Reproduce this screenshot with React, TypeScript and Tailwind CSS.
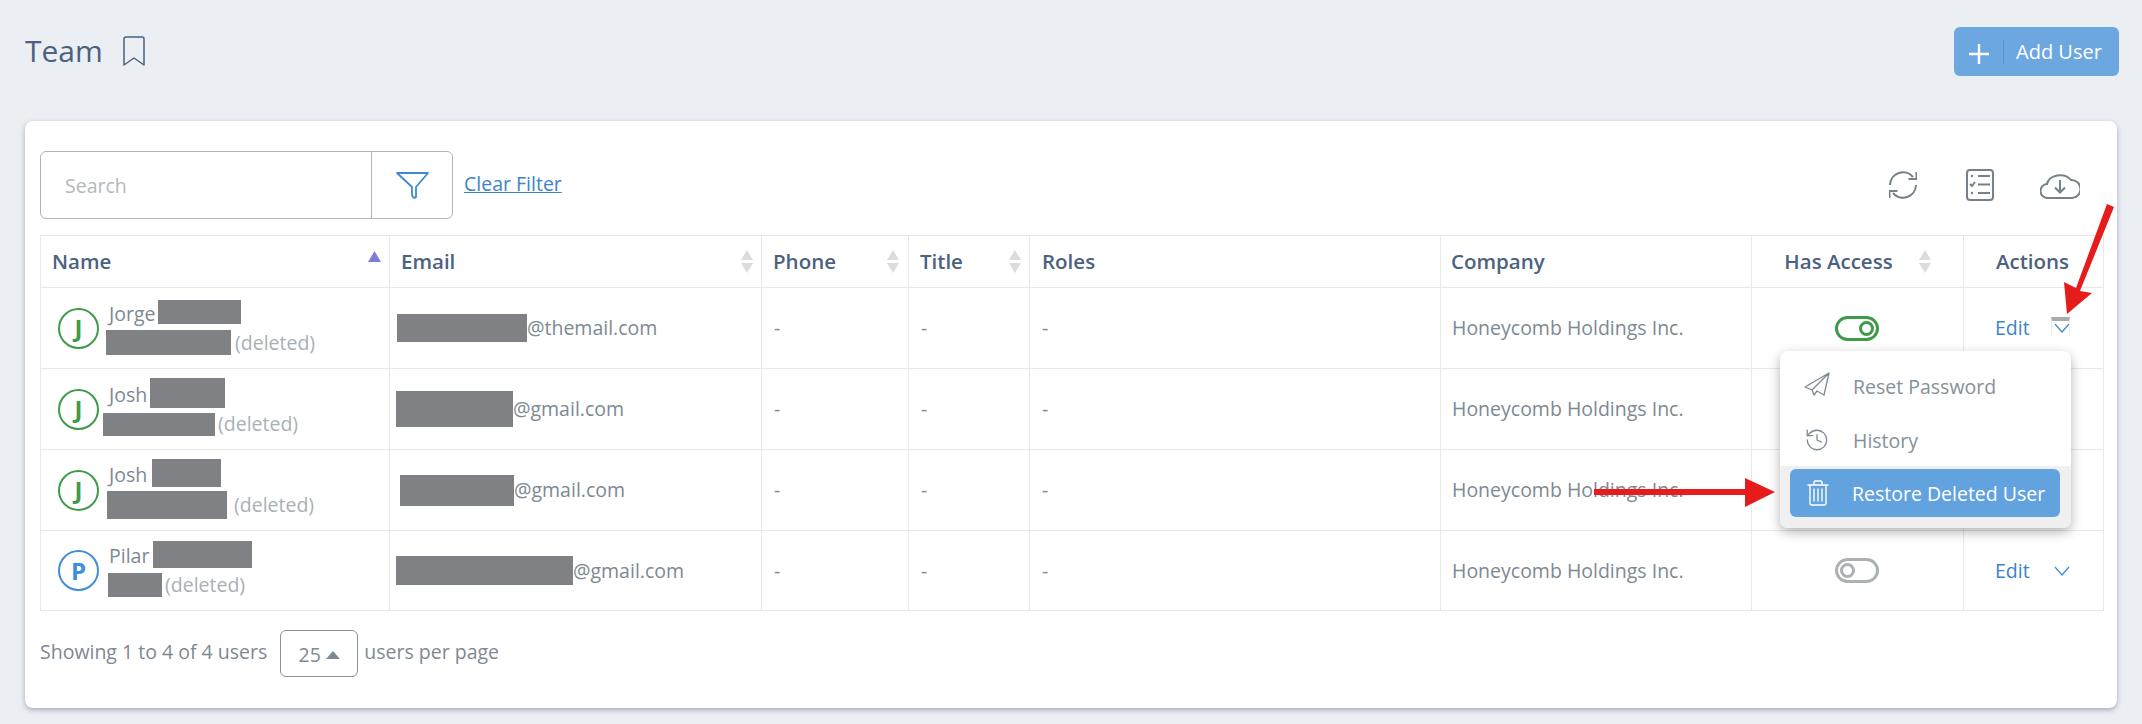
import { History } from 'lucide-react'

const users = [
  {
    first: 'Jorge',
    letter: 'J',
    ring: 'border-[#3f9a49] text-[#3f9a49]',
    rowH: 'h-[81px]',
    nameBox: 'w-[83px] h-[24px] ml-[3px] mt-[-3px]',
    lastBox: 'w-[125px] h-[25px] ml-[-3px]',
    delGap: 'ml-[4px]',
    nameLeft: 'ml-[10px]',
    mailBox: 'w-[130px] h-[28px] ml-[-1px]',
    domain: '@themail.com',
    access: true,
  },
  {
    first: 'Josh',
    letter: 'J',
    ring: 'border-[#3f9a49] text-[#3f9a49]',
    rowH: 'h-[81px]',
    nameBox: 'w-[75px] h-[30px] ml-[3px] mt-[-3px]',
    lastBox: 'w-[112px] h-[23px] ml-[-6px]',
    delGap: 'ml-[3px]',
    nameLeft: 'ml-[10px]',
    mailBox: 'w-[117px] h-[36px] ml-[-2px]',
    domain: '@gmail.com',
    access: true,
  },
  {
    first: 'Josh',
    letter: 'J',
    ring: 'border-[#3f9a49] text-[#3f9a49]',
    rowH: 'h-[81px]',
    nameBox: 'w-[69px] h-[28px] ml-[5px] mt-[-3px]',
    lastBox: 'w-[120px] h-[28px] ml-[-2px]',
    delGap: 'ml-[7px]',
    nameLeft: 'ml-[10px]',
    mailBox: 'w-[114px] h-[31px] ml-[2px]',
    domain: '@gmail.com',
    access: true,
  },
  {
    first: 'Pilar',
    letter: 'P',
    ring: 'border-[#3e8edc] text-[#3e8edc]',
    rowH: 'h-[80px]',
    nameBox: 'w-[99px] h-[27px] ml-[4px] mt-[-3px]',
    lastBox: 'w-[54px] h-[24px] ml-[-1px]',
    delGap: 'ml-[3px]',
    nameLeft: 'ml-[10px]',
    mailBox: 'w-[177px] h-[29px] ml-[-2px]',
    domain: '@gmail.com',
    access: false,
  },
]

const SortIcon = () => (
  <svg width="12" height="23" viewBox="0 0 12 23" className="shrink-0">
    <path d="M6 0l6 10H0z" fill="#dcdcdc" />
    <path d="M6 23l6-10H0z" fill="#dcdcdc" />
  </svg>
)

const Toggle = ({ on }: { on: boolean }) => (
  <div
    className={`mx-auto flex h-[25px] w-[44px] items-center rounded-full border-[3px] px-[2px] ${
      on ? 'justify-end border-[#3f9a49]' : 'justify-start border-[#acb1b4]'
    }`}
  >
    <div className={`h-[15px] w-[15px] rounded-full border-[3px] ${on ? 'border-[#3f9a49]' : 'border-[#acb1b4]'}`} />
  </div>
)

const Chevron = () => (
  <svg width="16" height="10" viewBox="0 0 16 10" fill="none" stroke="#3d8ad0" strokeWidth="1.2">
    <path d="M1 1l7 8 7-8" />
  </svg>
)

const ActionMenu = () => (
  <div className="absolute left-[-215px] top-[38px] z-10 w-[291px] overflow-hidden rounded-lg bg-white shadow-[0_4px_12px_rgba(0,0,0,0.3)]">
    <div className="flex h-[54px] items-center gap-[23px] pl-[24px] pt-[16px] text-[#85909a]">
      <svg width="26" height="28" viewBox="0 0 26 28" fill="none" stroke="#7d8993" strokeWidth="1.3" strokeLinejoin="round">
        <path d="M25 1L1 15l7 3 17-17-5 22-7-4-3 4-2-5z" />
      </svg>
      <span>Reset Password</span>
    </div>
    <div className="flex h-[54px] items-center gap-[23px] pl-[24px] pt-[16px] text-[#85909a]">
      <History size={26} strokeWidth={1.2} color="#7d8993" />
      <span>History</span>
    </div>
    <div className="mt-[7px] flex h-[62px] items-start bg-[#f0f0f0] px-[10px] pt-[3px]">
      <div className="flex h-[48px] w-[270px] items-center gap-[23px] rounded-md bg-[#62a2df] pl-[17px] text-white">
        <svg width="22" height="26" viewBox="0 0 22 26" fill="none" stroke="#fff" strokeWidth="1.4" strokeLinecap="round">
          <path d="M1 5h20M7 5V2.5A1.5 1.5 0 0 1 8.500 1h5A1.500 1.500 0 0 1 15 2.500V5M3 5v18a2 2 0 0 0 2 2h12a2 2 0 0 0 2-2V5M7 9v12M11 9v12M15 9v12" />
        </svg>
        <span>Restore Deleted User</span>
      </div>
    </div>
  </div>
)

const Arrows = () => (
  <svg className="pointer-events-none absolute left-0 top-0 z-20" width="2142" height="724" viewBox="0 0 2142 724">
    <path d="M2107 204l7 3-34 84 12 2-25 21-3-32 12 6z" fill="#e61c1c" />
    <path d="M1594 489h151v-11l30 14-30 15v-12h-151z" fill="#e61c1c" />
  </svg>
)

export default function App() {
  return (
    <div className="relative min-h-screen w-full bg-[#ebeef3] px-[23px] pb-[16px] pt-[27px] font-['Open_Sans',sans-serif] text-[19.5px] text-[#7d8993]">
      <Arrows />

      {/* Page header */}
      <div className="flex h-[49px] items-start justify-between">
        <div className="flex items-center gap-[20px] pl-[2px] pt-[5px]">
          <h1 className="text-[30px] font-normal leading-[38px] text-[#4b6180]">Team</h1>
          <svg width="22" height="30" viewBox="0 0 22 30" fill="none" stroke="#4b6180" strokeWidth="1.5" strokeLinejoin="round">
            <path d="M1 3a2 2 0 0 1 2-2h16a2 2 0 0 1 2 2v26l-10-7-10 7z" />
          </svg>
        </div>
        <button className="flex h-[49px] w-[165px] items-center rounded-md bg-[#6ca7e0] text-[20px] text-white">
          <svg width="20" height="20" viewBox="0 0 20 20" stroke="#fff" strokeWidth="2.4" className="ml-[15px] mt-[4px]">
            <path d="M10 0v20M0 10h20" />
          </svg>
          <span className="ml-[14px] h-[24px] w-px bg-[#5b93cb]" />
          <span className="ml-[12px]">Add User</span>
        </button>
      </div>

      {/* Card */}
      <div className="mx-[2px] mt-[45px] h-[587px] rounded-lg bg-white pl-[15px] pr-[16px] pt-[30px] shadow-[0_2px_5px_rgba(60,70,90,0.4)]">
        <div className="flex h-[68px] items-center">
          <div className="flex h-[68px] w-[413px] rounded-md border border-[#b0b5b8]">
            <input
              placeholder="Search"
              className="w-[331px] border-r border-[#b0b5b8] bg-transparent pl-[24px] pt-[2px] text-[19.5px] outline-none placeholder:text-[#b4b9bd]"
            />
            <div className="flex flex-1 items-center justify-center">
              <svg width="33" height="27" viewBox="0 0 33 27" fill="none" stroke="#3d8ad0" strokeWidth="1.800" strokeLinejoin="round">
                <path d="M1 1h31L20 15v10q-1.500 1.500-3 0l-1-2v-8z" />
              </svg>
            </div>
          </div>
          <a className="ml-[11px] mt-[-2px] text-[#3d84c6] underline">Clear Filter</a>
          <div className="ml-auto flex items-center pr-[21px]">
            <svg width="28" height="28" viewBox="0 0 28 28" fill="none" stroke="#75818b" strokeWidth="2">
              <path d="M1 14A13 13 0 0 1 24 6M27 14A13 13 0 0 1 4 22" />
              <path d="M27.500 1v7h-8M.5 27v-7h8" />
            </svg>
            <svg width="28" height="32" viewBox="0 0 28 32" fill="none" stroke="#75818b" strokeWidth="2" className="ml-[49px]">
              <rect x="1" y="1" width="26" height="30" rx="3" />
              <path d="M12 7h12M12 15.500h12M12 24h12" />
              <path d="M4 15l2 2 3-4" />
              <circle cx="6" cy="7" r="1.200" fill="#75818b" stroke="none" />
              <circle cx="6" cy="24" r="1.200" fill="#75818b" stroke="none" />
            </svg>
            <svg width="40" height="28" viewBox="0 0 40 28" fill="none" stroke="#75818b" strokeWidth="2" className="ml-[46px]">
              <path d="M8 27a7 7 0 0 1-1-14 13 10 0 0 1 24-4 8 8 0 0 1 1 18z" />
              <path d="M20 9v12M15 16.500l5 5 5-5" />
            </svg>
          </div>
        </div>

        <table className="mt-[16px] w-[2063px] table-fixed border-collapse">
          <thead>
            <tr className="h-[52px] text-left text-[20.5px] text-[#4b6180]">
              <th className="relative w-[349px] border border-[#e8e8e8] pl-[11px] font-semibold">
                Name
                <svg width="13" height="11" viewBox="0 0 13 11" className="absolute right-[8px] top-[15px]">
                  <path d="M6.500 0L13 11H0z" fill="#7d7dd8" />
                </svg>
              </th>
              <th className="w-[372px] border border-[#e8e8e8] pl-[11px] pr-[8px] font-semibold">
                <div className="flex items-center justify-between">Email<SortIcon /></div>
              </th>
              <th className="w-[147px] border border-[#e8e8e8] pl-[11px] pr-[9px] font-semibold">
                <div className="flex items-center justify-between">Phone<SortIcon /></div>
              </th>
              <th className="w-[121px] border border-[#e8e8e8] pl-[11px] pr-[8px] font-semibold">
                <div className="flex items-center justify-between">Title<SortIcon /></div>
              </th>
              <th className="w-[411px] border border-[#e8e8e8] pl-[12px] font-semibold">Roles</th>
              <th className="w-[311px] border border-[#e8e8e8] pl-[10px] font-semibold">Company</th>
              <th className="w-[212px] border border-[#e8e8e8] font-semibold">
                <div className="flex items-center justify-center gap-[26px]">Has Access<SortIcon /></div>
              </th>
              <th className="w-[140px] border border-[#e8e8e8] pr-[2px] text-center font-semibold">Actions</th>
            </tr>
          </thead>
          <tbody>
            {users.map((user, index) => (
              <tr key={index} className={user.rowH}>
                <td className="border border-[#e8e8e8] pl-[17px]">
                  <div className="flex items-center">
                    <div className={`flex h-[41px] w-[41px] shrink-0 items-center justify-center rounded-full border-2 text-[24px] font-bold ${user.ring}`}>
                      {user.letter}
                    </div>
                    <div className={user.nameLeft}>
                      <div className="flex items-center leading-[26px]">
                        <span>{user.first}</span>
                        <span className={`inline-block bg-[#808184] ${user.nameBox}`} />
                      </div>
                      <div className="mt-[3px] flex items-center leading-[26px]">
                        <span className={`inline-block bg-[#808184] ${user.lastBox}`} />
                        <span className={`text-[#a9b0b6] ${user.delGap}`}>(deleted)</span>
                      </div>
                    </div>
                  </div>
                </td>
                <td className="border border-[#e8e8e8] pl-[8px]">
                  <div className="flex items-center">
                    <span className={`inline-block bg-[#808184] ${user.mailBox}`} />
                    <span>{user.domain}</span>
                  </div>
                </td>
                <td className="border border-[#e8e8e8] pl-[12px]">-</td>
                <td className="border border-[#e8e8e8] pl-[12px]">-</td>
                <td className="border border-[#e8e8e8] pl-[12px]">-</td>
                <td className="border border-[#e8e8e8] pl-[11px]">Honeycomb Holdings Inc.</td>
                <td className="border border-[#e8e8e8] pr-[2px]">
                  {index === 0 || index === 3 ? <Toggle on={user.access} /> : null}
                </td>
                <td className="border border-[#e8e8e8] pl-[31px]">
                  {index === 0 || index === 3 ? (
                    <div className="relative flex items-center text-[#3d84c6]">
                      <span>Edit</span>
                      <span className="ml-[24px] flex">
                        <Chevron />
                      </span>
                      {index === 0 && (
                        <>
                          <span className="absolute left-[56px] top-[4px] h-[19px] w-[19px] border-x border-t-4 border-x-[#eeeeee] border-t-[#ababab]" />
                          <ActionMenu />
                        </>
                      )}
                    </div>
                  ) : null}
                </td>
              </tr>
            ))}
          </tbody>
        </table>

        {/* Pagination */}
        <div className="mt-[19px] flex items-center">
          <span className="mt-[-3px]">Showing 1 to 4 of 4 users</span>
          <div className="ml-[13px] flex h-[47px] w-[78px] items-center justify-center gap-[5px] rounded-md border border-[#88939c] pt-[2px]">
            25
            <svg width="14" height="8" viewBox="0 0 14 8">
              <path d="M7 0l7 8H0z" fill="#7d8993" />
            </svg>
          </div>
          <span className="ml-[6px] mt-[-3px]">users per page</span>
        </div>
      </div>
    </div>
  )
}
